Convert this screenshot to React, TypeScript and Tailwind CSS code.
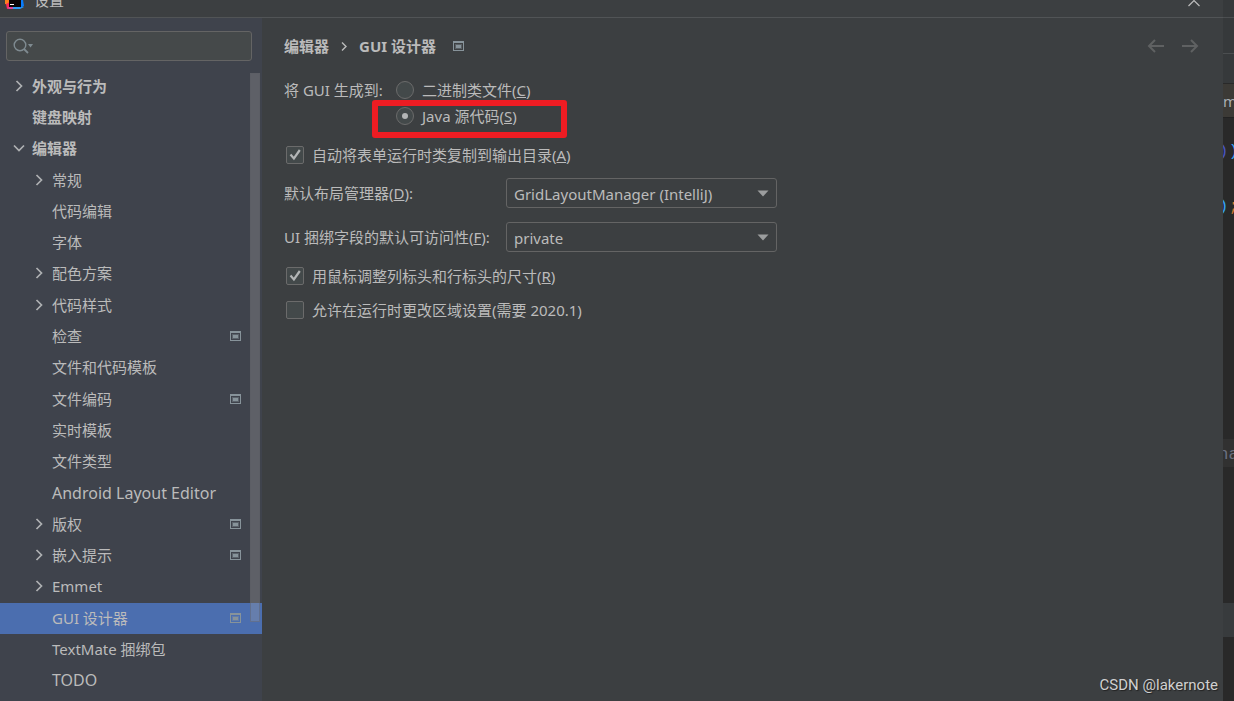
import { useState } from "react";

interface TreeItem {
    label: string;
    level: number;
    arrow?: "right" | "down";
    bold?: boolean;
    large?: boolean;
    project?: boolean;
}

const TREE: TreeItem[] = [
    { label: "外观与行为", level: 0, arrow: "right", bold: true },
    { label: "键盘映射", level: 0, bold: true },
    { label: "编辑器", level: 0, arrow: "down", bold: true },
    { label: "常规", level: 1, arrow: "right" },
    { label: "代码编辑", level: 1 },
    { label: "字体", level: 1 },
    { label: "配色方案", level: 1, arrow: "right" },
    { label: "代码样式", level: 1, arrow: "right" },
    { label: "检查", level: 1, project: true },
    { label: "文件和代码模板", level: 1 },
    { label: "文件编码", level: 1, project: true },
    { label: "实时模板", level: 1 },
    { label: "文件类型", level: 1 },
    { label: "Android Layout Editor", level: 1, large: true },
    { label: "版权", level: 1, arrow: "right", project: true },
    { label: "嵌入提示", level: 1, arrow: "right", project: true },
    { label: "Emmet", level: 1, arrow: "right" },
    { label: "GUI 设计器", level: 1, project: true },
    { label: "TextMate 捆绑包", level: 1 },
    { label: "TODO", level: 1, large: true },
];

const ProjectIcon = () => (
    <svg width="11" height="10" viewBox="0 0 11 10" className="shrink-0">
        <path d="M0 0h11v10H0zM1 2v7h9V2z" fill="#87939a" fillRule="evenodd" />
        <path d="M2 3h7v5H2z" fill="#87939a" opacity="0.4" />
        <path d="M3 4h5v3H3z" fill="#87939a" />
    </svg>
);

const Chevron = ({ dir }: { dir: "right" | "down" }) => (
    <svg
        width="12"
        height="12"
        viewBox="0 0 12 12"
        fill="none"
        stroke="#afb1b3"
        strokeWidth="1.7"
    >
        {dir === "right" ? (
            <path d="M3.5 1l5 5-5 5" />
        ) : (
            <path d="M1 3.5l5 5 5-5" />
        )}
    </svg>
);

const Logo = () => (
    <svg width="20" height="10" viewBox="0 0 20 10" className="shrink-0">
        <path d="M0 0h5v5L0 4z" fill="#fc801d" />
        <path d="M1 4l4-2v6l-3 1z" fill="#fe2857" />
        <path d="M2 8l3-2h4v3H4z" fill="#e0409a" />
        <path d="M8 6h8l3 1-4 2H8z" fill="#2f9bf5" />
        <path d="M15 0h3l1 6-4 2z" fill="#087cfa" />
        <path d="M4 0h12v7H4z" fill="#0a0406" />
        <path d="M5 4h4v1H5z" fill="#fff" />
    </svg>
);

const CheckBox = ({
    id,
    defaultChecked,
    children,
}: {
    id: string;
    defaultChecked?: boolean;
    children: React.ReactNode;
}) => (
    <div className="flex items-center gap-2">
        <span className="grid shrink-0">
            <input
                id={id}
                type="checkbox"
                defaultChecked={defaultChecked}
                className="peer col-start-1 row-start-1 size-[18px] appearance-none rounded-[2px] border border-[#6b6b6b] bg-[#43494a]"
            />
            <svg
                viewBox="0 0 18 18"
                fill="none"
                stroke="#b3b5b6"
                strokeWidth="2.2"
                className="pointer-events-none invisible col-start-1 row-start-1 size-[18px] peer-checked:visible"
            >
                <path d="M4.5 8.5l3.4 4L13.8 4" />
            </svg>
        </span>
        <label htmlFor={id}>{children}</label>
    </div>
);

const Radio = ({
    id,
    defaultChecked,
    children,
}: {
    id: string;
    defaultChecked?: boolean;
    children: React.ReactNode;
}) => (
    <div className="flex h-[26px] items-center gap-2">
        <span className="grid shrink-0 place-items-center">
            <input
                id={id}
                name="generate"
                type="radio"
                defaultChecked={defaultChecked}
                className="peer col-start-1 row-start-1 size-[18px] appearance-none rounded-full border border-[#6b6b6b] bg-[#43494a]"
            />
            <span className="pointer-events-none invisible col-start-1 row-start-1 size-[6px] rounded-full bg-[#b3b5b6] peer-checked:visible" />
        </span>
        <label htmlFor={id}>{children}</label>
    </div>
);

const Combo = ({ id, options }: { id: string; options: string[] }) => (
    <div className="grid items-center">
        <select
            id={id}
            className="col-start-1 row-start-1 h-[30px] appearance-none rounded-[3px] border border-[#646464] bg-[#3c3f41] pt-[2px] pr-8 pl-[7px]"
        >
            {options.map((option) => (
                <option key={option}>{option}</option>
            ))}
        </select>
        <svg
            width="12"
            height="7"
            viewBox="0 0 12 7"
            className="pointer-events-none col-start-1 row-start-1 mr-2 justify-self-end"
        >
            <path d="M0.5 0.5h11L6 6.5z" fill="#9b9d9e" />
        </svg>
    </div>
);

const Sidebar = () => {
    const [selected, setSelected] = useState("GUI 设计器");

    return (
        <aside className="w-[262px] shrink-0 bg-[#3f434c]">
            <div className="pt-[13px] pr-[10px] pl-[6px]">
                <div className="flex h-[30px] items-center gap-1 rounded-[3px] border border-[#646464] bg-[#45494a] px-[6px]">
                    <svg
                        width="21"
                        height="16"
                        viewBox="0 0 21 16"
                        fill="none"
                        className="shrink-0"
                    >
                        <circle cx="7" cy="7" r="5.8" stroke="#7f8b91" strokeWidth="1.4" />
                        <path d="M11 11l4 4" stroke="#7f8b91" strokeWidth="1.8" />
                        <path d="M15 6h5l-2.500 3.500z" fill="#7f8b91" />
                    </svg>
                    <input
                        type="search"
                        aria-label="搜索"
                        className="w-full min-w-0 bg-transparent outline-none"
                    />
                </div>
            </div>
            <div className="relative pt-[10px]">
                <ul className="grid h-[626px] auto-rows-fr">
                    {TREE.map((item) => (
                        <li key={item.label} className="grid">
                            <button
                                onClick={() => setSelected(item.label)}
                                className={`flex items-center gap-[7px] pr-[21px] pb-[2px] text-left ${
                                    item.level ? "pl-[33px]" : "pl-[13px]"
                                } ${selected === item.label ? "bg-[#4b6eaf]" : ""}`}
                            >
                                <span className="w-3 shrink-0">
                                    {item.arrow && <Chevron dir={item.arrow} />}
                                </span>
                                <span
                                    className={`flex-1 ${item.bold ? "font-bold" : ""} ${
                                        item.large ? "text-[16px]" : ""
                                    }`}
                                >
                                    {item.label}
                                </span>
                                {item.project && <ProjectIcon />}
                            </button>
                        </li>
                    ))}
                </ul>
                {/* scrollbar thumb over the tree */}
                <div className="pointer-events-none absolute top-3 right-[2px] h-[549px] w-[10px] border border-[#5a5d64]/40 bg-[#a6a6a6]/30" />
            </div>
        </aside>
    );
};

const Content = () => (
    <main className="min-w-0 flex-1 pr-6 pl-[22px]">
        <header className="flex h-14 items-center">
            <h1 className="flex items-center font-bold">
                <span>编辑器</span>
                <svg width="6" height="9" viewBox="0 0 6 9" fill="none" className="mx-3">
                    <path d="M1 0.5l4 4-4 4" stroke="#bbbbbb" strokeWidth="1.4" />
                </svg>
                <span className="mr-[17px]">GUI 设计器</span>
                <ProjectIcon />
            </h1>
            <div className="ml-auto flex gap-4">
                <button aria-label="后退">
                    <svg width="18" height="14" viewBox="0 0 18 14" fill="none" stroke="#5f6162" strokeWidth="2">
                        <path d="M17 7H2M8 1L2 7l6 6" />
                    </svg>
                </button>
                <button aria-label="前进">
                    <svg width="18" height="14" viewBox="0 0 18 14" fill="none" stroke="#5f6162" strokeWidth="2">
                        <path d="M1 7h15M10 1l6 6-6 6" />
                    </svg>
                </button>
            </div>
        </header>

        <fieldset className="relative flex pt-[3px]">
            <legend className="float-left h-[26px] w-[112px] leading-[26px]">
                将 GUI 生成到:
            </legend>
            <div>
                <Radio id="binary">
                    二进制类文件(<u>C</u>)
                </Radio>
                <Radio id="source" defaultChecked>
                    Java 源代码(<u>S</u>)
                </Radio>
            </div>
            <div className="pointer-events-none absolute top-[26px] left-[88px] h-[38px] w-[195px] rounded-[3px] border-6 border-[#ee1c23]" />
        </fieldset>

        <div className="mt-4 pl-[2px]">
            <CheckBox id="copy" defaultChecked>
                自动将表单运行时类复制到输出目录(<u>A</u>)
            </CheckBox>
        </div>
        <div className="mt-[13px] grid grid-cols-[222px_271px] items-center gap-y-[14px]">
            <label htmlFor="layout">
                默认布局管理器(<u>D</u>):
            </label>
            <Combo id="layout" options={["GridLayoutManager (IntelliJ)"]} />
            <label htmlFor="access">
                UI 捆绑字段的默认可访问性(<u>F</u>):
            </label>
            <Combo id="access" options={["private", "protected", "public"]} />
        </div>
        <div className="mt-[14px] flex flex-col gap-[14px] pl-[2px]">
            <CheckBox id="resize" defaultChecked>
                用鼠标调整列标头和行标头的尺寸(<u>R</u>)
            </CheckBox>
            <CheckBox id="locale">允许在运行时更改区域设置(需要 2020.1)</CheckBox>
        </div>
    </main>
);

// slice of the editor window left visible behind the dialog
const EditorEdge = () => (
    <div className="flex w-[11px] shrink-0 flex-col overflow-hidden bg-[#292929] font-['Liberation_Mono',monospace] text-[17px] leading-none">
        <div className="h-[18px] border-b border-[#4b4e50] bg-[#36393b]" />
        <div className="h-9 border-b border-[#4b4e50] bg-[#36393b]" />
        <div className="h-[30px] border-b border-[#292929] bg-[#36393b]" />
        <div className="flex h-[34px] items-center border-b border-[#222222] bg-[#3c3a36] pt-[2px] font-['Noto_Sans',sans-serif] text-[15px] text-[#a9adb3]">
            m
        </div>
        <div className="mt-[25px] flex h-[18px] justify-center text-[#359ff4]">
            <span className="text-[#4a55c0]">)</span>
            <span>)</span>
        </div>
        <div className="mt-[37px] flex h-[18px] justify-center">
            <span className="text-[#359ff4]">)</span>
            <span className="text-[#cc7832]">;</span>
        </div>
        <div className="mt-[223px] flex h-7 items-center justify-center bg-[#313131] pt-[3px] text-[#6a7080]">
            na
        </div>
        <div className="mt-[136px] h-[34px] bg-[#383b3d]" />
    </div>
);

export default function App() {
    return (
        <div className="flex h-screen overflow-hidden bg-[#3c3f41] font-['Noto_Sans','Noto_Sans_CJK_SC',sans-serif] text-[15px] leading-5 text-[#bbbbbb]">
            <div className="relative flex min-w-0 flex-1 flex-col">
                <div className="flex h-[18px] shrink-0 items-start justify-between border-b border-[#515456] pr-[23px] pl-[5px]">
                    <div className="flex items-start gap-[9px]">
                        <Logo />
                        <span className="-mt-[10px]">设置</span>
                    </div>
                    <button aria-label="关闭">
                        <svg width="12" height="7" viewBox="0 0 12 7" fill="none" stroke="#bbbbbb" strokeWidth="1.2">
                            <path d="M0.5 6L6 0.5 11.5 6" />
                        </svg>
                    </button>
                </div>
                <div className="flex min-h-0 flex-1">
                    <Sidebar />
                    <Content />
                </div>
                <div className="absolute right-[5px] bottom-[6px] font-['Roboto',sans-serif] text-[#d0d0d0] [text-shadow:1px_1px_1px_#222]">
                    CSDN @lakernote
                </div>
            </div>
            <EditorEdge />
        </div>
    );
}
